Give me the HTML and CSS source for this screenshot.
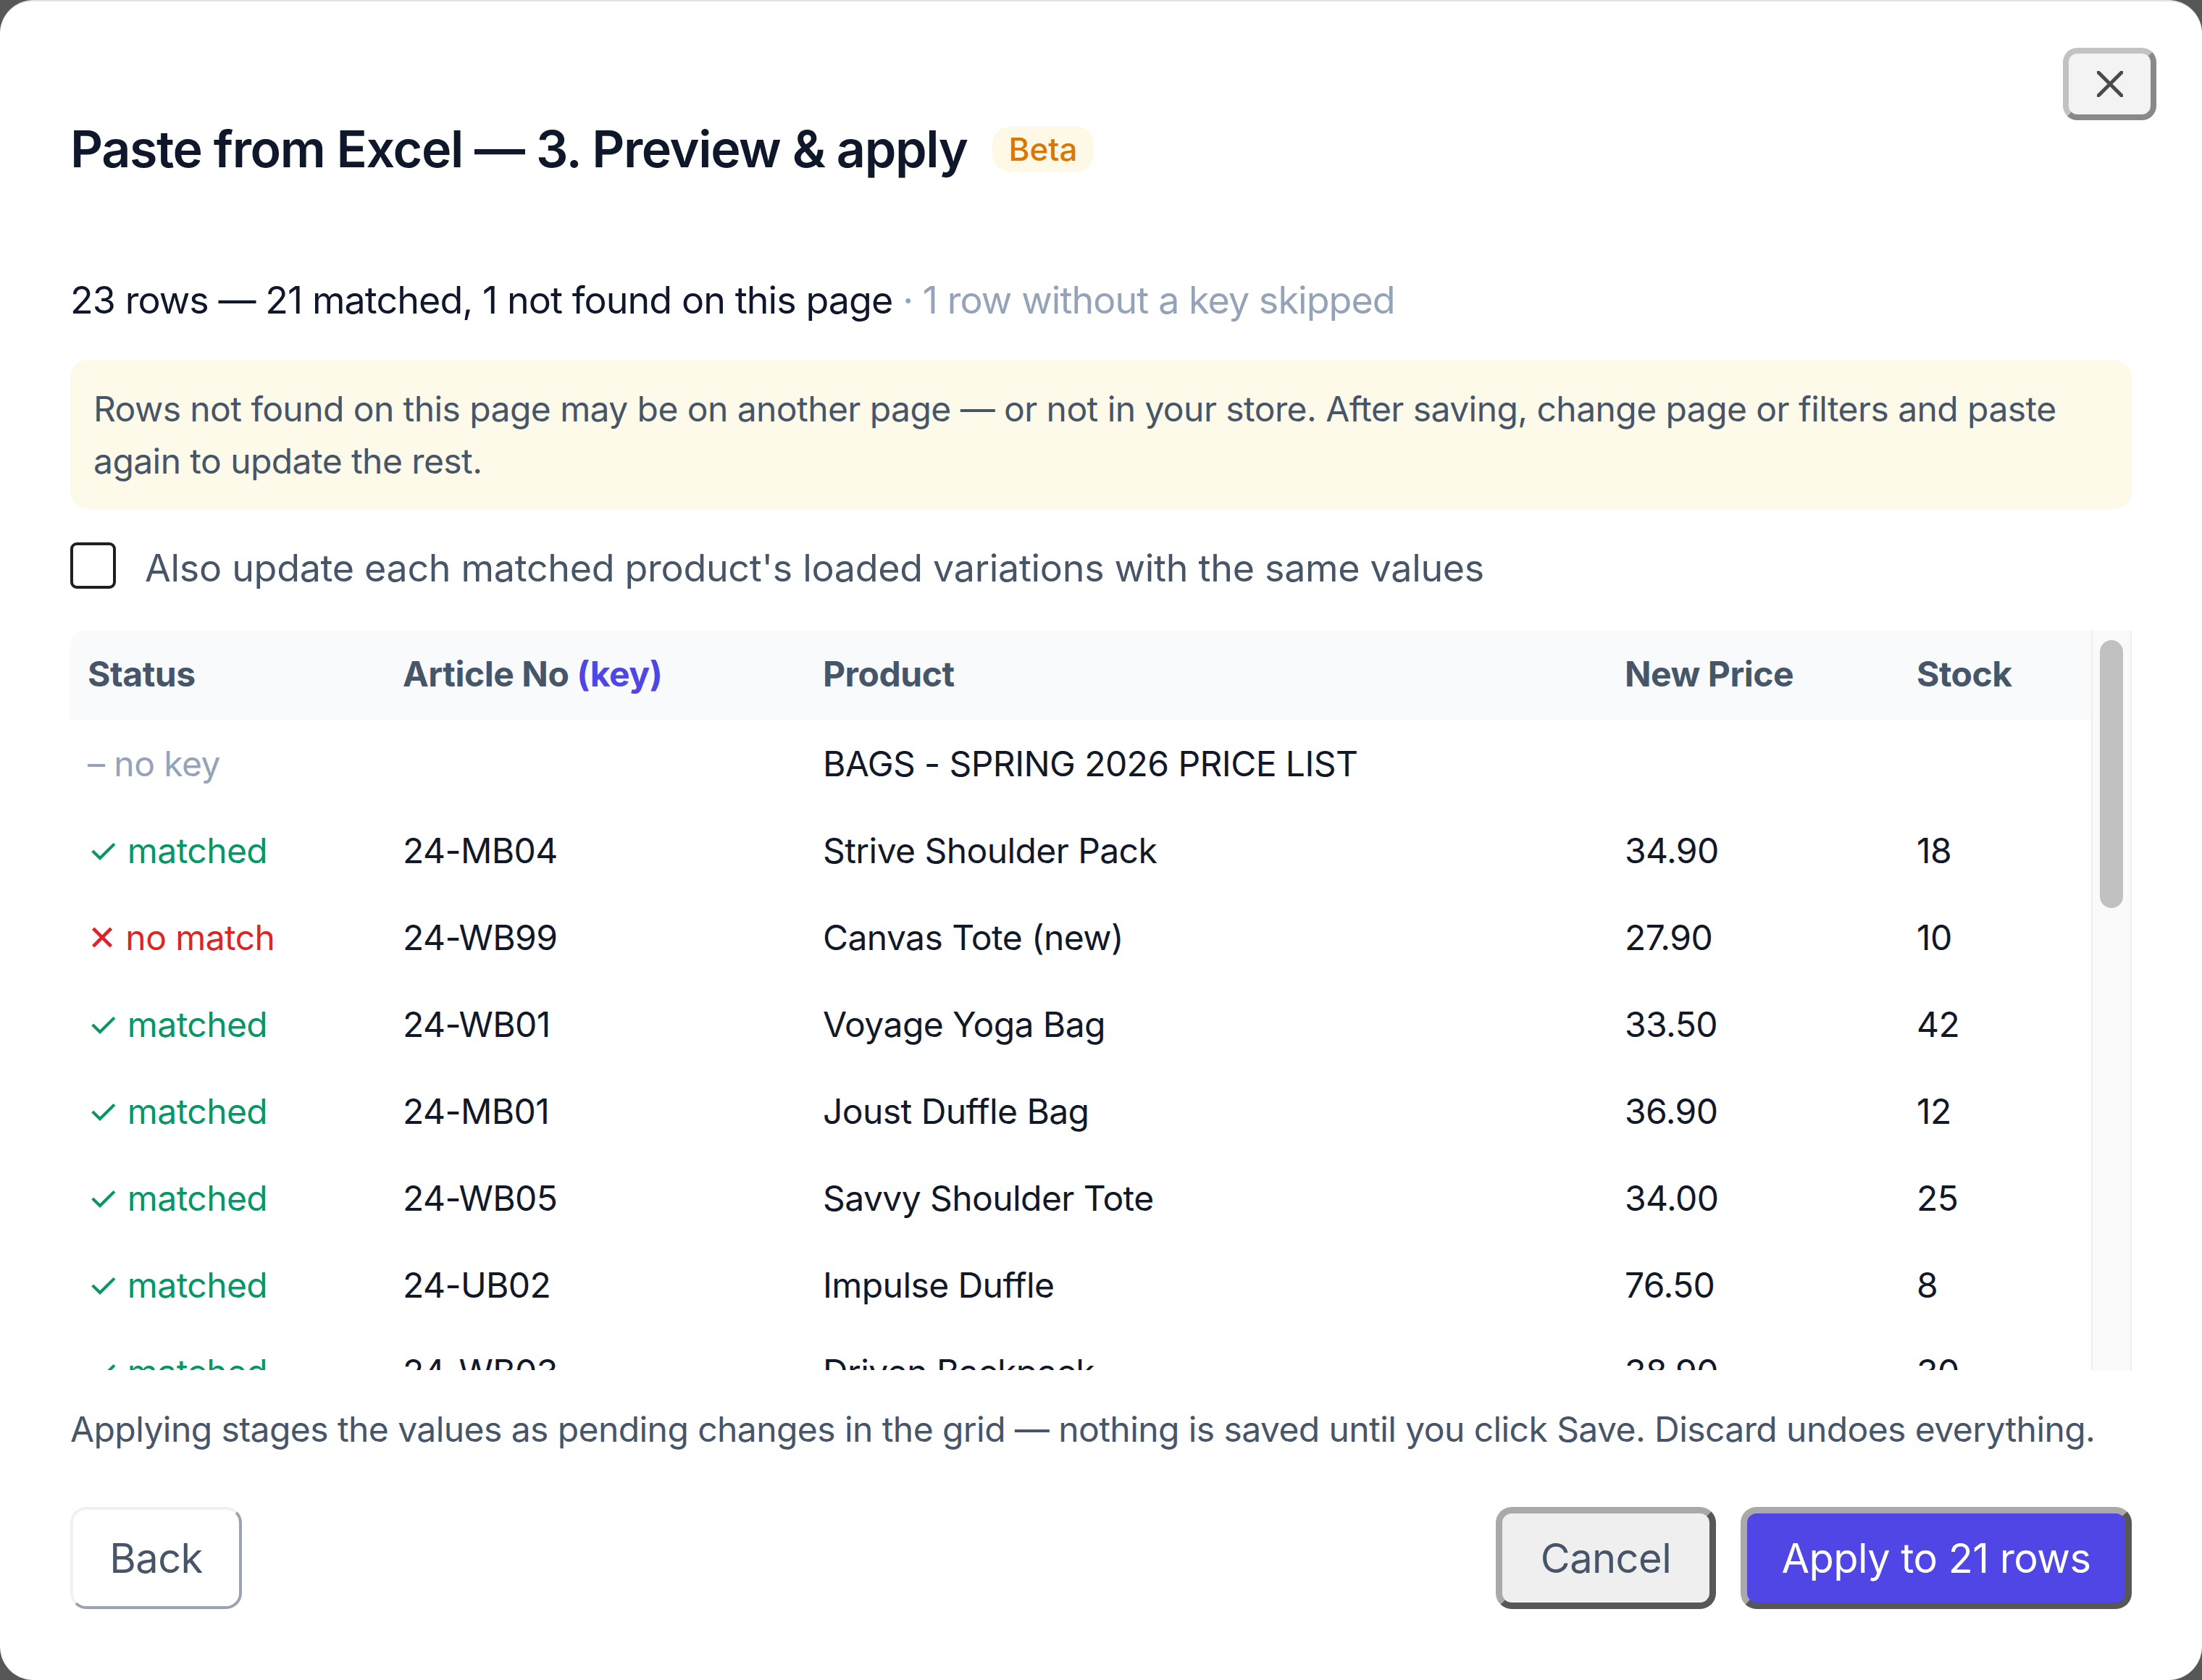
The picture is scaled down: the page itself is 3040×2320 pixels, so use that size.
FILE: index.html
```html
<!DOCTYPE html>
<html lang="en">
<head>
<meta charset="utf-8">
<title>Paste from Excel — 3. Preview &amp; apply</title>
<link rel="stylesheet" href="styles.css">
</head>
<body>
<div class="dialog">
  <div class="head">
    <h1 class="title">Paste from Excel — 3. Preview &amp; apply <span class="badge">Beta</span></h1>
    <button class="close" type="button" aria-label="Close">
      <svg viewBox="0 0 36 36" width="36" height="36"><path d="M2 2 L34 34 M34 2 L2 34" stroke="#4a4a4a" stroke-width="5" stroke-linecap="round" fill="none"/></svg>
    </button>
  </div>

  <p class="summary">23 rows — 21 matched, 1 not found on this page <span class="muted">· 1 row without a key skipped</span></p>

  <div class="notice">Rows not found on this page may be on another page — or not in your store. After saving, change page or filters and paste again to update the rest.</div>

  <label class="check"><span class="box"></span><span class="check-text">Also update each matched product's loaded variations with the same values</span></label>

  <div class="grid-wrap">
    <div class="grid-scroll">
      <table class="grid">
        <thead>
          <tr>
            <th class="c1">Status</th>
            <th class="c2">Article No <span class="key">(key)</span></th>
            <th class="c3">Product</th>
            <th class="c4">New Price</th>
            <th class="c5">Stock</th>
          </tr>
        </thead>
        <tbody>
          <tr><td class="st nokey">– no key</td><td></td><td>BAGS - SPRING 2026 PRICE LIST</td><td></td><td></td></tr>
          <tr><td class="st ok">✓ matched</td><td>24-MB04</td><td>Strive Shoulder Pack</td><td>34.90</td><td>18</td></tr>
          <tr><td class="st bad">✕ no match</td><td>24-WB99</td><td>Canvas Tote (new)</td><td>27.90</td><td>10</td></tr>
          <tr><td class="st ok">✓ matched</td><td>24-WB01</td><td>Voyage Yoga Bag</td><td>33.50</td><td>42</td></tr>
          <tr><td class="st ok">✓ matched</td><td>24-MB01</td><td>Joust Duffle Bag</td><td>36.90</td><td>12</td></tr>
          <tr><td class="st ok">✓ matched</td><td>24-WB05</td><td>Savvy Shoulder Tote</td><td>34.00</td><td>25</td></tr>
          <tr><td class="st ok">✓ matched</td><td>24-UB02</td><td>Impulse Duffle</td><td>76.50</td><td>8</td></tr>
          <tr><td class="st ok">✓ matched</td><td>24-WB03</td><td>Driven Backpack</td><td>38.90</td><td>30</td></tr>
        </tbody>
      </table>
    </div>
    <div class="scrollbar"><div class="thumb"></div></div>
  </div>

  <p class="foot">Applying stages the values as pending changes in the grid — nothing is saved until you click Save. Discard undoes everything.</p>

  <div class="actions">
    <button class="btn back" type="button">Back</button>
    <div class="right">
      <button class="btn cancel" type="button">Cancel</button>
      <button class="btn apply" type="button">Apply to 21 rows</button>
    </div>
  </div>
</div>
</body>
</html>
```

FILE: styles.css
```css
* { box-sizing: border-box; }

html, body {
  margin: 0;
  padding: 0;
  height: 100%;
}

body {
  background: #575757;
  font-family: Inter, "Noto Sans", "Liberation Sans", sans-serif;
  color: #0f172a;
  overflow: hidden;
}

.dialog {
  width: 3040px;
  height: 2320px;
  background: #ffffff;
  border-top: 2px solid #e3e3e3;
  border-radius: 46px;
  padding: 64px 97px 0 97px;
  display: flex;
  flex-direction: column;
}

.head {
  display: flex;
  justify-content: space-between;
  align-items: flex-start;
}

.title {
  margin: 96px 0 0 0;
  font-size: 70px;
  line-height: 88px;
  font-weight: 600;
  letter-spacing: -0.02em;
  color: #0f172a;
  display: flex;
  align-items: center;
  gap: 34px;
}

.badge {
  display: inline-flex;
  align-items: center;
  height: 62px;
  padding: 0 23px;
  border-radius: 24px;
  background: #fef9e6;
  color: #d97706;
  font-size: 44px;
  font-weight: 500;
  letter-spacing: 0;
}

.close {
  width: 129px;
  height: 100px;
  margin-right: -34px;
  padding: 0;
  background: #f3f3f3;
  border: 8px solid;
  border-color: #c2c2c2 #898989 #898989 #c2c2c2;
  border-radius: 20px;
  display: flex;
  align-items: center;
  justify-content: center;
}

.summary {
  margin: 126px 0 0 0;
  font-size: 52px;
  line-height: 78px;
  letter-spacing: -0.018em;
  color: #0f172a;
}

.muted { color: #94a3b8; }

.notice {
  margin-top: 43px;
  background: #fefae9;
  border-radius: 24px;
  padding: 32px 32px 30px 32px;
  font-size: 48px;
  line-height: 72px;
  letter-spacing: -0.012em;
  color: #475569;
}

.check {
  margin-top: 46px;
  display: flex;
  align-items: center;
  gap: 40px;
  font-size: 52px;
  letter-spacing: -0.006em;
  color: #475569;
}

.check-text {
  line-height: 56px;
  padding-top: 8px;
}

.box {
  width: 63px;
  height: 64px;
  border: 4px solid #1f1f1f;
  border-radius: 9px;
  background: #ffffff;
  flex: none;
}

.grid-wrap {
  margin-top: 58px;
  height: 1021px;
  display: flex;
  flex: none;
}

.grid-scroll {
  flex: 1;
  overflow: hidden;
  border-top-left-radius: 20px;
}

.grid {
  width: 100%;
  border-collapse: collapse;
  table-layout: fixed;
  font-size: 48px;
  letter-spacing: -0.012em;
}

.grid th {
  height: 123px;
  background: #f8fafc;
  text-align: left;
  font-weight: 700;
  color: #475569;
  padding: 0 24px 4px 24px;
  font-size: 48px;
  letter-spacing: -0.01em;
}

.grid td {
  height: 120px;
  padding: 0 24px;
  color: #111827;
  white-space: nowrap;
}

.c1 { width: 435px; }
.c2 { width: 580px; }
.c3 { width: 1107px; }
.c4 { width: 403px; }
.c5 { width: auto; }

.key { color: #4f46e5; }

.st.ok { color: #059669; }
.st.bad { color: #dc2626; }
.st.nokey { color: #94a3b8; }

.scrollbar {
  width: 56px;
  flex: none;
  background: #fafafa;
  border-left: 2px solid #ededed;
  border-right: 2px solid #ededed;
  padding: 13px 10px 0 10px;
}

.thumb {
  height: 370px;
  background: #c1c1c1;
  border-radius: 16px;
}

.foot {
  margin: 46px 0 0 0;
  font-size: 48px;
  line-height: 72px;
  letter-spacing: -0.012em;
  color: #475569;
}

.actions {
  margin-top: 71px;
  display: flex;
  justify-content: space-between;
  align-items: center;
}

.right {
  display: flex;
  gap: 34px;
}

.btn {
  height: 141px;
  font-family: Inter, "Noto Sans", "Liberation Sans", sans-serif;
  font-size: 56px;
  letter-spacing: -0.01em;
  color: #475569;
  border-radius: 22px;
  padding: 0;
}

.back {
  width: 237px;
  background: #ffffff;
  border: 4px solid;
  border-color: #eef2f7 #9ca3af #9ca3af #eef2f7;
}

.cancel {
  width: 304px;
  background: #efefef;
  border: 9px solid;
  border-color: #a9a9a9 #575757 #575757 #a9a9a9;
}

.apply {
  width: 540px;
  background: #4f46e5;
  color: #ffffff;
  border: 9px solid;
  border-color: #a9a9a9 #575757 #575757 #a9a9a9;
}
```
